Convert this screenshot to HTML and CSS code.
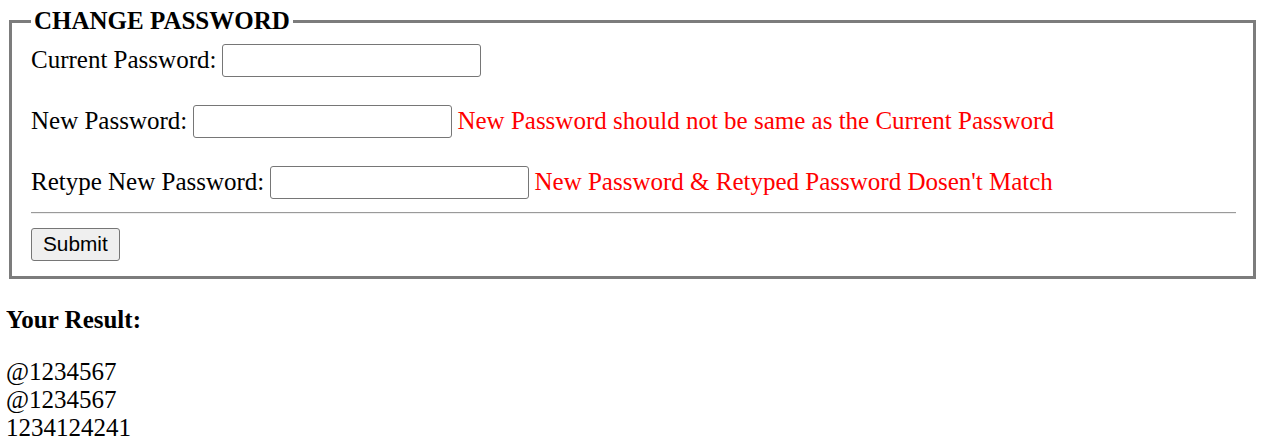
FILE: index.html
```html
<!DOCTYPE html>
<html>
<head>
<meta charset="utf-8">
<title>Change Password</title>
<link rel="stylesheet" href="styles.css">
</head>
<body>
<form class="pw-form">
  <fieldset class="pw-box">
    <legend class="pw-legend">CHANGE PASSWORD</legend>
    <div class="row">
      <label class="lbl">Current Password:</label>
      <input class="field" type="password">
    </div>
    <div class="row">
      <label class="lbl">New Password:</label>
      <input class="field" type="password">
      <span class="err">New Password should not be same as the Current Password</span>
    </div>
    <div class="row row-last">
      <label class="lbl">Retype New Password:</label>
      <input class="field" type="password">
      <span class="err">New Password &amp; Retyped Password Dosen't Match</span>
    </div>
    <hr class="sep">
    <button class="btn" type="button">Submit</button>
  </fieldset>
</form>
<h4 class="result-title">Your Result:</h4>
<div class="result">
  <div>@1234567</div>
  <div>@1234567</div>
  <div>1234124241</div>
</div>
</body>
</html>
```
FILE: styles.css
```css
html, body {
  background: #ffffff;
}
body {
  margin: 6px;
  font-family: "Liberation Serif", "Times New Roman", serif;
  font-size: 25px;
  line-height: 28px;
  color: #000000;
}
.pw-form {
  margin: 0;
}
.pw-box {
  margin: 0 8px 0 3px;
  padding: 8px 17px 15px 19px;
  border: 3px solid #7c7c7c;
  min-width: 0;
}
.pw-legend {
  padding: 0 3px;
  font-weight: bold;
  line-height: 30px;
}
.row {
  display: flex;
  align-items: flex-start;
  column-gap: 5.6px;
  height: 33px;
  margin-bottom: 28px;
}
.row-last {
  margin-bottom: 0;
}
.lbl, .err {
  margin-top: 2px;
  white-space: nowrap;
}
.err {
  color: #ff0000;
}
.field {
  box-sizing: border-box;
  width: 259px;
  height: 33px;
  margin: 0;
  padding: 2px 3px;
  border: 1px solid #767676;
  border-radius: 3px;
  background: #ffffff;
  font-family: "Liberation Sans", Arial, sans-serif;
  font-size: 20.8px;
  flex: none;
}
.sep {
  height: 0;
  margin: 13px 0 14px 0;
  border: 0;
  border-top: 1px solid #9a9a9a;
  border-bottom: 1px solid #eeeeee;
}
.btn {
  display: block;
  box-sizing: border-box;
  height: 33px;
  margin: 0;
  padding: 0 11px;
  border: 1px solid #767676;
  border-radius: 3px;
  background: #efefef;
  color: #000000;
  font-family: "Liberation Sans", Arial, sans-serif;
  font-size: 20.8px;
  line-height: 1;
}
.result-title {
  margin: 27px 0 24px 0;
  font-size: 25px;
  font-weight: bold;
  line-height: 28px;
}
.result {
  line-height: 28px;
}
```
